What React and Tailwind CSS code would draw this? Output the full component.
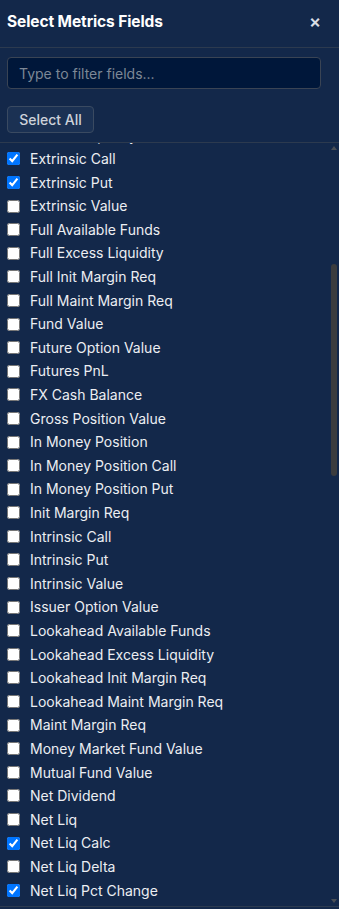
import { useState, useEffect, useRef } from 'react'

const BEFORE = [
  'Account Type', 'Accrued Cash', 'Accrued Dividend', 'Accrued Interest', 'Available Funds',
  'Billable', 'Buying Power', 'Cash Balance', 'Corporate Bond Value', 'Crypto Value',
  'Currency', 'Cushion', 'Daily PnL', 'Day Trades Remaining', 'Delta',
  'Equity With Loan Value', 'Excess Liquidity',
]

const VISIBLE = [
  'Extrinsic Call', 'Extrinsic Put', 'Extrinsic Value', 'Full Available Funds',
  'Full Excess Liquidity', 'Full Init Margin Req', 'Full Maint Margin Req', 'Fund Value',
  'Future Option Value', 'Futures PnL', 'FX Cash Balance', 'Gross Position Value',
  'In Money Position', 'In Money Position Call', 'In Money Position Put', 'Init Margin Req',
  'Intrinsic Call', 'Intrinsic Put', 'Intrinsic Value', 'Issuer Option Value',
  'Lookahead Available Funds', 'Lookahead Excess Liquidity', 'Lookahead Init Margin Req',
  'Lookahead Maint Margin Req', 'Maint Margin Req', 'Money Market Fund Value',
  'Mutual Fund Value', 'Net Dividend', 'Net Liq', 'Net Liq Calc', 'Net Liq Delta',
  'Net Liq Pct Change',
]

const AFTER = [
  'Net Liq MTD', 'Net Liq Uncertainty', 'Net Liq WTD', 'Net Liq YTD', 'Net Liquidation By Currency',
  'Non Marginable Value', 'Open Orders Count', 'Option Market Value', 'Options Delta',
  'Options Gamma', 'Options Theta', 'Options Vega', 'PA Shares Value', 'Pct Change',
  'Physical Certificate Value', 'Portfolio Beta', 'Portfolio Delta', 'Position Count',
  'Post Expiration Excess', 'Post Expiration Margin', 'Premium Collected',
  'Previous Day Equity With Loan Value', 'Previous Net Liq', 'Realized PnL', 'Realized PnL Call',
  'Realized PnL Put', 'Reg T Equity', 'Reg T Margin', 'Regulatory Margin', 'Return On Capital',
  'SMA', 'Segment Title', 'Short Call Value', 'Short Market Value', 'Short Option Value',
  'Short Put Value', 'Short Stock Value', 'Stock Market Value', 'T Bill Value', 'T Bond Value',
  'Theta', 'Today Realized PnL', 'Total Cash Balance', 'Total Cash Value',
  'Total Debit Card Pending Charges', 'Total Delta', 'Total Gamma', 'Total Theta', 'Total Vega',
  'Trading Type', 'Unaltered Init Margin Req', 'Unaltered Maint Margin Req', 'Unrealized PnL',
  'Unrealized PnL Call', 'Unrealized PnL Put', 'Unsettled Cash', 'Utilization', 'Vega',
  'Warrant Value', 'What If PM Enabled', 'Wheel Premium', 'Withdrawable Cash', 'YTD PnL',
  'YTD Return',
]

const FIELDS = [...BEFORE, ...VISIBLE, ...AFTER]
const ROW_H = 23.6

export default function App() {
  const [filter, setFilter] = useState('')
  const [checked, setChecked] = useState(
    () => new Set(['Extrinsic Call', 'Extrinsic Put', 'Net Liq Calc', 'Net Liq Pct Change'])
  )
  const [bar, setBar] = useState({ top: 0, size: 1 })
  const listRef = useRef(null)
  const trackRef = useRef(null)

  // hand-drawn scrollbar, kept in sync with the list
  const syncBar = () => {
    const el = listRef.current
    const track = trackRef.current
    if (!el || !track) return
    const trackH = track.clientHeight
    const size = Math.max(20, (trackH * el.clientHeight) / el.scrollHeight)
    const max = el.scrollHeight - el.clientHeight
    const top = max > 0 ? ((trackH - size) * el.scrollTop) / max : 0
    setBar({ top, size })
  }

  useEffect(() => {
    if (listRef.current) listRef.current.scrollTop = BEFORE.length * ROW_H - 4.2
    syncBar()
  }, [])

  const toggle = (name) => {
    setChecked((prev) => {
      const next = new Set(prev)
      next.has(name) ? next.delete(name) : next.add(name)
      return next
    })
  }

  const shown = FIELDS.filter((f) => f.toLowerCase().includes(filter.toLowerCase()))

  return (
    <div className="h-[909px] flex flex-col bg-[#13284a] font-['Inter','Liberation_Sans',sans-serif] overflow-hidden">
      {/* Header */}
      <div className="h-[48px] shrink-0 flex items-center justify-between pl-[7px] pr-[18px] pb-[3px] border-b border-[#2c3a4f]">
        <h2 className="text-[15.5px] font-bold text-white tracking-[-0.1px]">Select Metrics Fields</h2>
        <button className="text-[#d8dde5] text-[18px] leading-none font-semibold">×</button>
      </div>

      {/* Controls */}
      <div className="shrink-0 pl-[7px] pt-[9px] pb-[9px]">
        <input
          value={filter}
          onChange={(e) => setFilter(e.target.value)}
          placeholder="Type to filter fields..."
          className="w-[314px] h-[32px] rounded-[4px] border border-[#3a4454] bg-[#00173a] px-[11px] text-sm text-white placeholder:text-[#7d8896] outline-none"
        />
        <button
          onClick={() => setChecked(new Set(FIELDS))}
          className="mt-[17px] h-[27px] w-[87px] rounded-[4px] border border-[#3a4a61] bg-[#1b3153] text-sm font-medium text-[#cdd2da]"
        >
          Select All
        </button>
      </div>

      {/* List + scrollbar */}
      <div className="flex-1 min-h-0 mb-[2px] flex border-y border-[#2c3a4f]">
        <div
          ref={listRef}
          onScroll={syncBar}
          className="flex-1 overflow-y-auto [scrollbar-width:none]"
        >
          {shown.map((name) => (
            <label
              key={name}
              className="flex items-center gap-[10px] pl-[7px] py-[2px] text-sm leading-[1.4] text-[#eceef2] cursor-pointer"
            >
              <input
                type="checkbox"
                checked={checked.has(name)}
                onChange={() => toggle(name)}
                className="m-0 w-[13px] h-[13px] shrink-0"
              />
              <span>{name}</span>
            </label>
          ))}
        </div>
        <div className="w-[10px] shrink-0 flex flex-col items-center">
          <div className="h-[10px] flex items-center justify-center">
            <svg width="6" height="4" viewBox="0 0 6 4"><path d="M3 0L6 4H0z" fill="#4a4f57" /></svg>
          </div>
          <div ref={trackRef} className="flex-1 w-full flex justify-center">
            <div
              className="w-[6px] rounded-full bg-[#3b3c3e]"
              style={{ marginTop: bar.top, height: bar.size }}
            />
          </div>
          <div className="h-[10px] flex items-center justify-center">
            <svg width="6" height="4" viewBox="0 0 6 4"><path d="M0 0H6L3 4z" fill="#4a4f57" /></svg>
          </div>
        </div>
      </div>
    </div>
  )
}
